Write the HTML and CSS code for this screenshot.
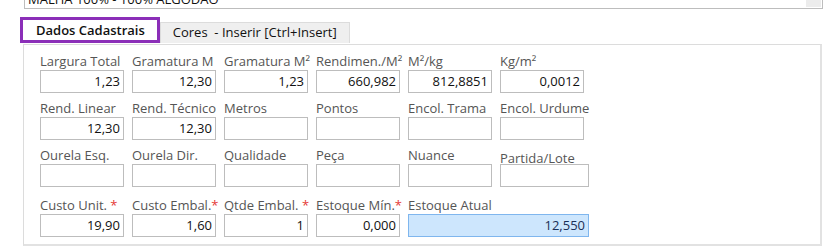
FILE: index.html
```html
<!DOCTYPE html>
<html lang="pt-BR">
<head>
  <meta charset="UTF-8" />
  <title>Produto - Dados Cadastrais</title>
  <link rel="stylesheet" href="styles.css">
</head>
<body>
  <div class="top-field">
    <span class="top-text">MALHA 100% - 100% ALGODÃO</span>
    <span class="grip"></span>
  </div>

  <div class="tabs">
    <div class="tab active">Dados Cadastrais</div>
    <div class="tab">Cores&nbsp; - Inserir [Ctrl+Insert]</div>
  </div>

  <div class="panel">
    <div class="grid">
      <div class="field"><label>Largura Total</label><div class="input">1,23</div></div>
      <div class="field"><label>Gramatura M</label><div class="input">12,30</div></div>
      <div class="field"><label>Gramatura M²</label><div class="input">1,23</div></div>
      <div class="field"><label>Rendimen./M²</label><div class="input">660,982</div></div>
      <div class="field"><label>M²/kg</label><div class="input">812,8851</div></div>
      <div class="field"><label>Kg/m²</label><div class="input">0,0012</div></div>

      <div class="field"><label>Rend. Linear</label><div class="input">12,30</div></div>
      <div class="field"><label>Rend. Técnico</label><div class="input">12,30</div></div>
      <div class="field"><label>Metros</label><div class="input"></div></div>
      <div class="field"><label>Pontos</label><div class="input"></div></div>
      <div class="field"><label>Encol. Trama</label><div class="input"></div></div>
      <div class="field"><label>Encol. Urdume</label><div class="input"></div></div>

      <div class="field"><label>Ourela Esq.</label><div class="input"></div></div>
      <div class="field"><label>Ourela Dir.</label><div class="input"></div></div>
      <div class="field"><label>Qualidade</label><div class="input"></div></div>
      <div class="field"><label>Peça</label><div class="input"></div></div>
      <div class="field"><label>Nuance</label><div class="input"></div></div>
      <div class="field"><label class="low">Partida/Lote</label><div class="input wide"></div></div>

      <div class="field last"><label>Custo Unit. <span class="req">*</span></label><div class="input">19,90</div></div>
      <div class="field last"><label>Custo Embal.<span class="req">*</span></label><div class="input">1,60</div></div>
      <div class="field last"><label>Qtde Embal. <span class="req">*</span></label><div class="input">1</div></div>
      <div class="field last"><label>Estoque Mín.<span class="req">*</span></label><div class="input">0,000</div></div>
      <div class="field last span2"><label>Estoque Atual</label><div class="input highlight">12,550</div></div>
    </div>
  </div>
</body>
</html>
```

FILE: styles.css
```css
body {
  margin: 0;
  font-family: 'Open Sans', 'Noto Sans', sans-serif;
  font-size: 13px;
  background-color: #ffffff;
  color: #222;
}

.top-field {
  display: flex;
  justify-content: space-between;
  align-items: flex-start;
  margin: -14px 0 0 24px;
  width: 797px;
  height: 22px;
  border: 1px solid #bdbdbd;
  border-top: none;
  line-height: 18px;
  overflow: hidden;
}

.top-text {
  padding-left: 3px;
  margin-top: 4px;
  color: #111;
}

.grip {
  width: 15px;
  height: 7px;
  margin-top: 14px;
  margin-right: 1px;
  background-color: #ececec;
}

.tabs {
  display: flex;
  align-items: flex-end;
  margin: 8px 0 0 20px;
}

.tab {
  height: 20px;
  line-height: 19px;
  padding: 0 12px;
  background-color: #efefef;
  border: 1px solid #dcdcdc;
  border-bottom: none;
  color: #111;
}

.tab.active {
  height: 20px;
  line-height: 20px;
  padding: 0 12px 0 13px;
  background-color: #ffffff;
  border: 3px solid #8b2fb8;
  font-weight: 600;
}

.panel {
  margin: 1px 0 0 23px;
  width: 799px;
  border: 1px solid #dcdcdc;
  border-right: 2px solid #e2e2e2;
  border-bottom: 2px solid #e2e2e2;
  padding: 8px 16px 7px 16px;
  box-sizing: border-box;
}

.grid {
  display: grid;
  grid-template-columns: repeat(6, 84px);
  column-gap: 8px;
  row-gap: 7px;
}

.field label {
  display: block;
  height: 16px;
  line-height: 16px;
  margin-bottom: 1px;
  color: #555;
  white-space: nowrap;
}

.field label.low {
  position: relative;
  top: 3px;
}

.field.last {
  margin-top: 3px;
}

.req {
  color: #e53935;
}

.input {
  width: 84px;
  height: 23px;
  line-height: 21px;
  box-sizing: border-box;
  border: 1px solid #bdbdbd;
  padding: 0 3px;
  text-align: right;
  color: #111;
}

.input.wide {
  width: 89px;
}

.span2 {
  grid-column: span 2;
}

.input.highlight {
  width: 181px;
  background-color: #cde6fd;
  border-color: #7fb6ee;
  color: #1b2f57;
}
```
